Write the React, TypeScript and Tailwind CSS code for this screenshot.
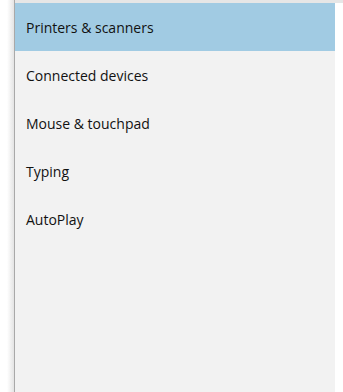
import React from "react";

const items = [
  "Printers & scanners",
  "Connected devices",
  "Mouse & touchpad",
  "Typing",
  "AutoPlay",
];

export default function App() {
  return (
    <div className="w-[343px] h-[392px] flex bg-white overflow-hidden font-['Open_Sans',sans-serif]">
      {/* shadow gutter */}
      <div className="w-[14px] h-full bg-gradient-to-r from-white via-white to-[#e4e4e4]" />
      <div className="w-px h-full bg-[#a9a9a9]" />

      <div className="flex-1 flex flex-col">
        <div className="h-[3px] bg-[#e6e6e6]" />
        <div className="flex-1 flex">
          <nav className="w-[320px] h-full bg-[#f2f2f2] flex flex-col">
            {items.map((label, i) => (
              <div
                key={label}
                className={
                  i === 0
                    ? "h-12 flex items-center pl-[11px] text-[14px] text-[#111] bg-[#a1cbe3]"
                    : "h-12 flex items-center pl-[11px] text-[14px] text-[#111]"
                }
              >
                {label}
              </div>
            ))}
          </nav>
          <div className="flex-1 bg-white" />
        </div>
      </div>
    </div>
  );
}
